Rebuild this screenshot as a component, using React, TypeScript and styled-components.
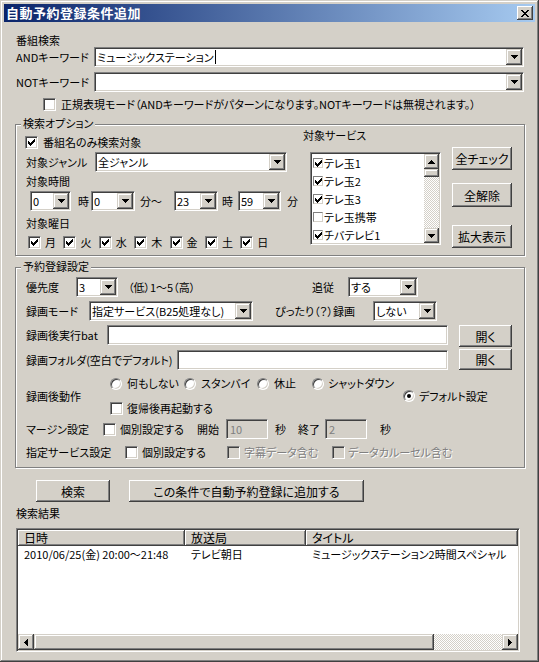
import React from 'react'
import styled, { createGlobalStyle, css } from 'styled-components'

const GlobalStyle = createGlobalStyle`
  body {
    margin: 0;
    background: #d4d0c8;
    font-family: "Noto Sans CJK JP", "Liberation Sans", sans-serif;
    font-size: 11px;
    font-feature-settings: "palt";
    color: #000;
  }
`

const raised = css`
  background: #d4d0c8;
  box-shadow: inset -1px -1px #404040, inset 1px 1px #fff, inset -2px -2px #808080, inset 2px 2px #d4d0c8;
`

const raisedSoft = css`
  background: #d4d0c8;
  box-shadow: inset -1px -1px #404040, inset 1px 1px #d4d0c8, inset -2px -2px #808080, inset 2px 2px #fff;
`

const sunken = css`
  box-sizing: border-box;
  border: 1px solid;
  border-color: #808080 #fff #fff #808080;
  box-shadow: inset 1px 1px #404040, inset -1px -1px #d4d0c8;
`

const dither = css`
  background: repeating-conic-gradient(#fff 0 25%, #d4d0c8 0 50%) 0 0 / 2px 2px;
`

const Window = styled.div`
  width: 539px;
  height: 662px;
  box-sizing: border-box;
  padding: 4px;
  background: #d4d0c8;
  box-shadow: inset -1px -1px #404040, inset 1px 1px #d4d0c8, inset -2px -2px #808080, inset 2px 2px #fff;
  display: flex;
  flex-direction: column;
`

const TitleBar = styled.div`
  height: 18px;
  display: flex;
  align-items: center;
  justify-content: space-between;
  padding: 0 2px;
  background: linear-gradient(to right, #0a246a, #a6caf0);
`

const Title = styled.span`
  color: #fff;
  font-weight: bold;
  font-size: 13px;
  line-height: 18px;
  letter-spacing: 0.5px;
`

const CloseButton = styled.div`
  ${raised};
  width: 16px;
  height: 14px;
  display: flex;
  align-items: center;
  justify-content: center;
`

const Client = styled.div`
  display: flex;
  flex-direction: column;
  padding: 0 10px 0 11px;
`

const SectionLabel = styled.div<{ $mt?: number }>`
  margin-top: ${(p) => p.$mt ?? 0}px;
  padding-left: 1px;
  line-height: 13px;
  height: 13px;
  white-space: nowrap;
`

const Row = styled.div<{ $h: number; $mt?: number; $pl?: number; $top?: boolean }>`
  display: flex;
  align-items: ${(p) => (p.$top ? 'flex-start' : 'center')};
  height: ${(p) => p.$h}px;
  margin-top: ${(p) => p.$mt ?? 0}px;
  padding-left: ${(p) => p.$pl ?? 0}px;
  flex-shrink: 0;
`

const Text = styled.span<{ $ml?: number; $w?: number; $disabled?: boolean }>`
  display: inline-block;
  flex-shrink: 0;
  white-space: nowrap;
  line-height: 13px;
  margin-left: ${(p) => p.$ml ?? 0}px;
  ${(p) => p.$w && `width: ${p.$w}px;`}
  color: ${(p) => (p.$disabled ? '#808080' : '#000')};
  ${(p) => p.$disabled && 'text-shadow: 1px 1px #fff;'}
`

const FieldLabel = styled(Text)`
  line-height: 20px;
`

const ComboBox = styled.div<{ $w: number }>`
  ${sunken};
  width: ${(p) => p.$w}px;
  height: 20px;
  flex-shrink: 0;
  display: flex;
  align-items: center;
  background: #fff;
`

const ComboValue = styled.span`
  flex: 1;
  padding-left: 2px;
  white-space: nowrap;
  overflow: hidden;
  line-height: 16px;
  display: flex;
  align-items: center;
`

const DropButton = styled.span`
  ${raisedSoft};
  width: 16px;
  height: 16px;
  margin: 1px;
  flex-shrink: 0;
  display: flex;
  align-items: center;
  justify-content: center;
`

const Caret = styled.span`
  display: inline-block;
  width: 1px;
  height: 14px;
  background: #000;
  margin-left: 1px;
`

const TextBox = styled.div<{ $w: number; $disabled?: boolean }>`
  ${sunken};
  width: ${(p) => p.$w}px;
  height: 20px;
  flex-shrink: 0;
  padding-left: 3px;
  line-height: 18px;
  background: ${(p) => (p.$disabled ? '#d4d0c8' : '#fff')};
  color: ${(p) => (p.$disabled ? '#808080' : '#000')};
`

const Button = styled.div<{ $w: number; $h: number; $mt?: number; $ml?: number }>`
  ${raised};
  width: ${(p) => p.$w}px;
  height: ${(p) => p.$h}px;
  margin-top: ${(p) => p.$mt ?? 0}px;
  margin-left: ${(p) => p.$ml ?? 0}px;
  flex-shrink: 0;
  display: flex;
  align-items: center;
  justify-content: center;
  white-space: nowrap;
  font-size: 12px;
`

const CheckBox = styled.span<{ $disabled?: boolean; $small?: boolean }>`
  ${sunken};
  width: ${(p) => (p.$small ? 10 : 13)}px;
  height: ${(p) => (p.$small ? 10 : 13)}px;
  flex-shrink: 0;
  display: flex;
  align-items: center;
  justify-content: center;
  background: ${(p) => (p.$disabled ? '#d4d0c8' : '#fff')};
  ${(p) => p.$small && 'box-shadow: none; border-color: #808080 #d4d0c8 #d4d0c8 #808080;'}
`

const RadioCircle = styled.span`
  width: 12px;
  height: 12px;
  box-sizing: border-box;
  border-radius: 50%;
  border: 1px solid;
  border-color: #808080 #fff #fff #808080;
  box-shadow: inset 1px 1px #404040, inset -1px -1px #d4d0c8;
  background: #fff;
  flex-shrink: 0;
  display: flex;
  align-items: center;
  justify-content: center;
`

const RadioDot = styled.span`
  width: 4px;
  height: 4px;
  border-radius: 50%;
  background: #000;
`

const Item = styled.span<{ $w?: number }>`
  display: flex;
  align-items: center;
  flex-shrink: 0;
  ${(p) => p.$w && `width: ${p.$w}px;`}
`

const Group = styled.div<{ $mt: number; $h: number }>`
  position: relative;
  box-sizing: border-box;
  margin-top: ${(p) => p.$mt}px;
  height: ${(p) => p.$h}px;
  flex-shrink: 0;
  border: 1px solid #808080;
  box-shadow: inset 1px 1px #fff, 1px 1px #fff;
`

const GroupLabel = styled.span`
  position: absolute;
  top: -8px;
  left: 5px;
  padding: 0 2px;
  line-height: 13px;
  background: #d4d0c8;
  white-space: nowrap;
`

const OptionsBody = styled.div`
  display: flex;
  padding: 4px 0 0 8px;
`

const LeftCol = styled.div`
  width: 279px;
  display: flex;
  flex-direction: column;
`

const DayRow = styled.div`
  display: flex;
  align-items: center;
  gap: 7.4px;
  height: 14px;
  margin-top: 5px;
  padding-left: 4px;
`

const ServiceCol = styled.div`
  display: flex;
  flex-direction: column;
`

const ServiceBody = styled.div`
  display: flex;
  margin-top: 5px;
`

const ServiceList = styled.div`
  ${sunken};
  width: 131px;
  height: 93px;
  margin: 5px 0 0 7px;
  background: #fff;
  padding: 1px;
  display: flex;
`

const ServiceItems = styled.div`
  flex: 1;
  overflow: hidden;
`

const ServiceItem = styled.div`
  height: 18px;
  display: flex;
  align-items: center;
  padding-left: 1px;
`

const VScroll = styled.div`
  width: 15px;
  display: flex;
  flex-direction: column;
  ${dither};
`

const ScrollButton = styled.div<{ $w?: number; $h?: number }>`
  ${raisedSoft};
  width: ${(p) => p.$w ?? 15}px;
  height: ${(p) => p.$h ?? 15}px;
  flex-shrink: 0;
  display: flex;
  align-items: center;
  justify-content: center;
`

const ServiceButtons = styled.div`
  display: flex;
  flex-direction: column;
  margin-left: 11px;
`

const ReserveBody = styled.div`
  display: flex;
  flex-direction: column;
  padding: 9px 0 0 10px;
`

const ActionRow = styled.div`
  display: flex;
  align-items: center;
  height: 38px;
  margin-top: 7px;
`

const ActionOptions = styled.div`
  width: 293px;
  display: flex;
  flex-direction: column;
  gap: 12px;
`

const ResultList = styled.div`
  ${sunken};
  width: 504px;
  height: 124px;
  margin: 8px 0 0 1px;
  padding: 1px;
  background: #fff;
  display: flex;
  flex-direction: column;
`

const HeaderRow = styled.div`
  display: flex;
  height: 16px;
  flex-shrink: 0;
`

const HeaderCell = styled.div<{ $w?: number }>`
  ${raised};
  ${(p) => (p.$w ? `width: ${p.$w}px;` : 'flex: 1;')}
  box-sizing: border-box;
  padding-left: 6px;
  line-height: 16px;
  white-space: nowrap;
  font-size: 12px;
`

const ListBody = styled.div`
  flex: 1;
`

const ResultRow = styled.div`
  display: flex;
  height: 16px;
  align-items: center;
`

const Cell = styled.span<{ $w?: number }>`
  ${(p) => (p.$w ? `width: ${p.$w}px;` : 'flex: 1;')}
  box-sizing: border-box;
  padding-left: 6px;
  white-space: nowrap;
  line-height: 16px;
`

const HScroll = styled.div`
  display: flex;
  height: 16px;
  flex-shrink: 0;
  ${dither};
`

const HThumb = styled.div`
  ${raisedSoft};
  width: 400px;
  height: 16px;
`

const HTrack = styled.div`
  flex: 1;
`

const ActionButtons = styled.div`
  display: flex;
  margin-top: 12px;
  padding-left: 21px;
`

type Dir = 'up' | 'down' | 'left' | 'right'

const arrowPaths: Record<Dir, string> = {
  down: 'M0 0h7v1H0zM1 1h5v1H1zM2 2h3v1H2zM3 3h1v1H3z',
  up: 'M3 0h1v1H3zM2 1h3v1H2zM1 2h5v1H1zM0 3h7v1H0z',
  left: 'M3 0h1v7H3zM2 1h1v5H2zM1 2h1v3H1zM0 3h1v1H0z',
  right: 'M0 0h1v7H0zM1 1h1v5H1zM2 2h1v3H2zM3 3h1v1H3z',
}

function Arrow({ dir }: { dir: Dir }) {
  const vertical = dir === 'up' || dir === 'down'
  return (
    <svg width={vertical ? 7 : 4} height={vertical ? 4 : 7} shapeRendering="crispEdges">
      <path d={arrowPaths[dir]} fill="#000" />
    </svg>
  )
}

function CloseIcon() {
  return (
    <svg width="8" height="7" shapeRendering="crispEdges">
      <path
        d="M0 0h2v1H0zM6 0h2v1H6zM1 1h2v1H1zM5 1h2v1H5zM2 2h4v1H2zM3 3h2v1H3zM2 4h4v1H2zM1 5h2v1H1zM5 5h2v1H5zM0 6h2v1H0zM6 6h2v1H6z"
        fill="#000"
      />
    </svg>
  )
}

function Check({ checked, disabled, small }: { checked?: boolean; disabled?: boolean; small?: boolean }) {
  return (
    <CheckBox $disabled={disabled} $small={small}>
      {checked && (
        <svg width="7" height="7" shapeRendering="crispEdges">
          <path
            d="M6 0h1v1H6zM5 1h2v1H5zM0 2h1v1H0zM4 2h3v1H4zM0 3h2v1H0zM3 3h3v1H3zM0 4h5v1H0zM1 5h3v1H1zM2 6h1v1H2z"
            fill="#000"
          />
        </svg>
      )}
    </CheckBox>
  )
}

function Radio({ on }: { on?: boolean }) {
  return <RadioCircle>{on && <RadioDot />}</RadioCircle>
}

function Combo({ w, value }: { w: number; value: React.ReactNode }) {
  return (
    <ComboBox $w={w}>
      <ComboValue>{value}</ComboValue>
      <DropButton>
        <Arrow dir="down" />
      </DropButton>
    </ComboBox>
  )
}

const days = ['月', '火', '水', '木', '金', '土', '日']

const services = [
  { name: 'テレ玉1', on: true },
  { name: 'テレ玉2', on: true },
  { name: 'テレ玉3', on: true },
  { name: 'テレ玉携帯', on: false },
  { name: 'チバテレビ1', on: true },
]

export default function App() {
  return (
    <>
      <GlobalStyle />
      <Window>
        <TitleBar>
          <Title>自動予約登録条件追加</Title>
          <CloseButton>
            <CloseIcon />
          </CloseButton>
        </TitleBar>
        <Client>
          <SectionLabel $mt={12}>番組検索</SectionLabel>
          <Row $h={20} $pl={1}>
            <FieldLabel $w={78}>ANDキーワード</FieldLabel>
            <Combo
              w={430}
              value={
                <>
                  ミュージックステーション
                  <Caret />
                </>
              }
            />
          </Row>
          <Row $h={20} $mt={5} $pl={1}>
            <FieldLabel $w={78}>NOTキーワード</FieldLabel>
            <Combo w={430} value="" />
          </Row>
          <Row $h={15} $mt={5} $pl={28}>
            <Check />
            <Text $ml={5}>正規表現モード（ANDキーワードがパターンになります。NOTキーワードは無視されます。）</Text>
          </Row>

          <Group $mt={12} $h={132}>
            <GroupLabel>検索オプション</GroupLabel>
            <OptionsBody>
              <LeftCol>
                <Row $h={15} $mt={6} $pl={1}>
                  <Check checked />
                  <Text $ml={5}>番組名のみ検索対象</Text>
                </Row>
                <Row $h={20} $mt={2} $pl={2}>
                  <FieldLabel $w={69}>対象ジャンル</FieldLabel>
                  <Combo w={192} value="全ジャンル" />
                </Row>
                <Row $h={13} $mt={3} $pl={2}>
                  <Text>対象時間</Text>
                </Row>
                <Row $h={20} $mt={3} $pl={6}>
                  <Combo w={41} value="0" />
                  <Text $ml={7} $w={13}>時</Text>
                  <Combo w={44} value="0" />
                  <Text $ml={5} $w={34}>分〜</Text>
                  <Combo w={44} value="23" />
                  <Text $ml={4} $w={16}>時</Text>
                  <Combo w={43} value="59" />
                  <Text $ml={6}>分</Text>
                </Row>
                <Row $h={13} $mt={6} $pl={2}>
                  <Text>対象曜日</Text>
                </Row>
                <DayRow>
                  {days.map((d) => (
                    <Item key={d}>
                      <Check checked />
                      <Text $ml={4}>{d}</Text>
                    </Item>
                  ))}
                </DayRow>
              </LeftCol>
              <ServiceCol>
                <Text>対象サービス</Text>
                <ServiceBody>
                  <ServiceList>
                    <ServiceItems>
                      {services.map((s) => (
                        <ServiceItem key={s.name}>
                          <Check small checked={s.on} />
                          <Text $ml={1}>{s.name}</Text>
                        </ServiceItem>
                      ))}
                    </ServiceItems>
                    <VScroll>
                      <ScrollButton>
                        <Arrow dir="up" />
                      </ScrollButton>
                      <ScrollButton $h={8} />
                      <HTrack />
                      <ScrollButton>
                        <Arrow dir="down" />
                      </ScrollButton>
                    </VScroll>
                  </ServiceList>
                  <ServiceButtons>
                    <Button $w={60} $h={23}>全チェック</Button>
                    <Button $w={60} $h={24} $mt={13}>全解除</Button>
                    <Button $w={60} $h={23} $mt={18}>拡大表示</Button>
                  </ServiceButtons>
                </ServiceBody>
              </ServiceCol>
            </OptionsBody>
          </Group>

          <Group $mt={11} $h={201}>
            <GroupLabel>予約登録設定</GroupLabel>
            <ReserveBody>
              <Row $h={20}>
                <FieldLabel $w={50}>優先度</FieldLabel>
                <Combo w={42} value="3" />
                <Text $ml={10} $w={184}>（低）1〜5（高）</Text>
                <FieldLabel $w={36}>追従</FieldLabel>
                <Combo w={70} value="する" />
              </Row>
              <Row $h={20} $mt={4}>
                <FieldLabel $w={63}>録画モード</FieldLabel>
                <Combo w={164} value="指定サービス(B25処理なし)" />
                <Text $ml={22} $w={98}>ぴったり（？）録画</Text>
                <Combo w={64} value="しない" />
              </Row>
              <Row $h={22} $mt={4} $top>
                <FieldLabel $w={81}>録画後実行bat</FieldLabel>
                <TextBox $w={341} />
                <Button $w={53} $h={22} $ml={11}>開く</Button>
              </Row>
              <Row $h={21} $mt={2}>
                <FieldLabel $w={151}>録画フォルダ(空白でデフォルト)</FieldLabel>
                <TextBox $w={271} />
                <Button $w={53} $h={21} $ml={11}>開く</Button>
              </Row>
              <ActionRow>
                <Text $w={84}>録画後動作</Text>
                <ActionOptions>
                  <Row $h={13}>
                    <Item $w={74}>
                      <Radio />
                      <Text $ml={5}>何もしない</Text>
                    </Item>
                    <Item $w={73}>
                      <Radio />
                      <Text $ml={5}>スタンバイ</Text>
                    </Item>
                    <Item $w={55}>
                      <Radio />
                      <Text $ml={5}>休止</Text>
                    </Item>
                    <Item>
                      <Radio />
                      <Text $ml={4}>シャットダウン</Text>
                    </Item>
                  </Row>
                  <Row $h={13}>
                    <Check />
                    <Text $ml={4}>復帰後再起動する</Text>
                  </Row>
                </ActionOptions>
                <Item>
                  <Radio on />
                  <Text $ml={4}>デフォルト設定</Text>
                </Item>
              </ActionRow>
              <Row $h={20} $mt={4}>
                <Text $w={77}>マージン設定</Text>
                <Check />
                <Text $ml={4} $w={77}>個別設定する</Text>
                <Text $w={29}>開始</Text>
                <TextBox $w={42} $disabled>10</TextBox>
                <Text $ml={7} $w={23}>秒</Text>
                <Text $w={27}>終了</Text>
                <TextBox $w={42} $disabled>2</TextBox>
                <Text $ml={13}>秒</Text>
              </Row>
              <Row $h={14} $mt={6}>
                <Text $w={99}>指定サービス設定</Text>
                <Check />
                <Text $ml={4} $w={85}>個別設定する</Text>
                <Check disabled />
                <Text $ml={4} $w={88} $disabled>字幕データ含む</Text>
                <Check disabled />
                <Text $ml={3} $disabled>データカルーセル含む</Text>
              </Row>
            </ReserveBody>
          </Group>

          <ActionButtons>
            <Button $w={74} $h={22}>検索</Button>
            <Button $w={235} $h={22} $ml={19}>この条件で自動予約登録に追加する</Button>
          </ActionButtons>
          <SectionLabel $mt={5}>検索結果</SectionLabel>
          <ResultList>
            <HeaderRow>
              <HeaderCell $w={167}>日時</HeaderCell>
              <HeaderCell $w={121}>放送局</HeaderCell>
              <HeaderCell>タイトル</HeaderCell>
            </HeaderRow>
            <ListBody>
              <ResultRow>
                <Cell $w={167}>2010/06/25(金) 20:00〜21:48</Cell>
                <Cell $w={121}>テレビ朝日</Cell>
                <Cell>ミュージックステーション2時間スペシャル</Cell>
              </ResultRow>
            </ListBody>
            <HScroll>
              <ScrollButton $w={16} $h={16}>
                <Arrow dir="left" />
              </ScrollButton>
              <HThumb />
              <HTrack />
              <ScrollButton $w={16} $h={16}>
                <Arrow dir="right" />
              </ScrollButton>
            </HScroll>
          </ResultList>
        </Client>
      </Window>
    </>
  )
}
